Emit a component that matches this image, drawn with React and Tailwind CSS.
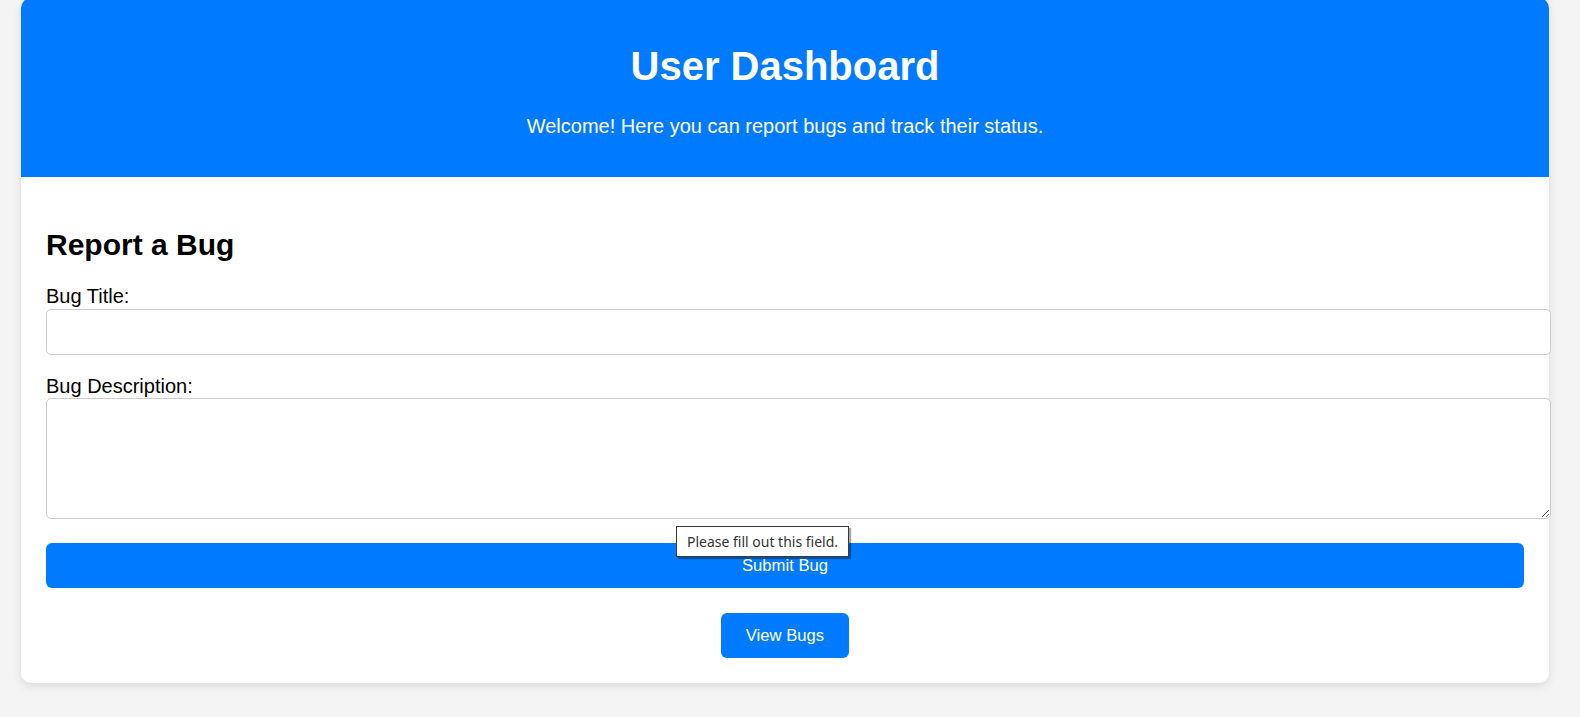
import React, { useState } from 'react';

const Dashboard = () => {
  const [title, setTitle] = useState('');
  const [description, setDescription] = useState('');

  return (
    <div className="min-h-[717px] bg-[#f4f4f4] font-['Liberation_Sans',Arial,sans-serif] text-black overflow-hidden">
      <div className="relative ml-[21px] mt-[-2px] w-[1528px] rounded-[10px] bg-white shadow-[0_3px_10px_rgba(0,0,0,0.1)]">
        <header className="rounded-t-[10px] bg-[#007bff] pt-[45px] pb-[39px] text-center text-white">
          <h1 className="text-[40px] font-bold leading-[46px]">User Dashboard</h1>
          <p className="mt-[26px] text-[20px] leading-[23px]">Welcome! Here you can report bugs and track their status.</p>
        </header>

        <section className="px-[25px] pt-[50px] pb-[25px]">
          <h2 className="text-[30px] font-bold leading-[35px]">Report a Bug</h2>

          <form onSubmit={(e) => e.preventDefault()} className="mt-[23px]">
            <label className="block text-[20px] leading-[23px]">Bug Title:</label>
            <input
              type="text"
              required
              value={title}
              onChange={(e) => setTitle(e.target.value)}
              className="mt-[1px] block h-[46px] w-[1505px] rounded-[5px] border border-[#cccccc] bg-white px-[12px] text-[20px] outline-none"
            />

            <label className="mt-[20px] block text-[20px] leading-[23px]">Bug Description:</label>
            <textarea
              required
              value={description}
              onChange={(e) => setDescription(e.target.value)}
              className="block h-[121px] w-[1505px] rounded-[5px] border border-[#cccccc] bg-white px-[12px] py-[12px] text-[20px] outline-none"
            ></textarea>

            <button
              type="submit"
              className="mt-[24px] block h-[45px] w-full rounded-[6px] bg-[#007bff] text-[16.67px] text-white"
            >
              Submit Bug
            </button>
          </form>

          <div className="mt-[25px] flex justify-center">
            <button className="h-[45px] w-[128px] rounded-[6px] bg-[#007bff] text-[16.67px] text-white">View Bugs</button>
          </div>
        </section>

        {/* native validation bubble */}
        <div className="absolute left-[655px] top-[528px] flex h-[31px] w-[173px] items-center justify-center border border-[#3a3a3a] bg-white font-['Noto_Sans',sans-serif] text-[14px] text-[#333333] shadow-[2px_2px_1px_rgba(0,0,0,0.35)]">
          Please fill out this field.
        </div>
      </div>
    </div>
  );
};

export default function App() {
  return <Dashboard />;
}
